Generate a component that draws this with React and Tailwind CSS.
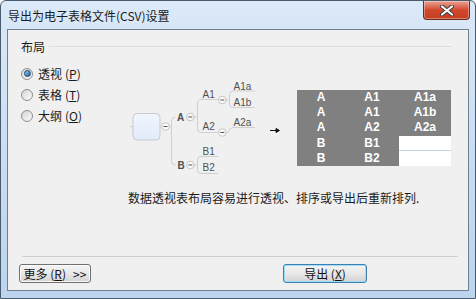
import React from "react";

const cjk = { fontFamily: '"Noto Sans CJK SC", "Liberation Sans", sans-serif' };

const Radio = ({ label, hotkey, checked }) => (
  <div className="flex h-[21px] items-center">
    <span className="flex h-[12px] w-[12px] items-center justify-center rounded-full border border-[#8e8f8f] bg-gradient-to-br from-[#d6d6d6] to-[#fbfbfb]">
      {checked && (
        <span className="h-[7px] w-[7px] rounded-full border border-[#19426a] bg-gradient-to-br from-[#8dd3f7] to-[#1a62a6]" />
      )}
    </span>
    <span className="ml-[5px] text-[12px] leading-[14px] text-[#1a1a1a]">
      {label}
      <span className="ml-[3px]">(</span>
      <span className="underline">{hotkey}</span>
      <span>)</span>
    </span>
  </div>
);

const Minus = ({ cx, cy }) => (
  <g>
    <circle cx={cx} cy={cy} r="3.8" fill="#fafafa" stroke="#c4c4c4" strokeWidth="1" />
    <line x1={cx - 2} y1={cy} x2={cx + 2} y2={cy} stroke="#555" strokeWidth="1" />
  </g>
);

const MindMap = () => (
  <svg width="162" height="120" viewBox="128 63 162 120" className="block">
    <defs>
      <linearGradient id="rootFill" x1="0" y1="0" x2="0" y2="1">
        <stop offset="0" stopColor="#f0f5fd" />
        <stop offset="1" stopColor="#e2ebfa" />
      </linearGradient>
    </defs>
    <g fill="none" stroke="#cfcfcf" strokeWidth="1">
      <line x1="130" y1="126.5" x2="133" y2="126.5" />
      <line x1="169.5" y1="126.5" x2="171.5" y2="126.5" />
      <path d="M171.5 126.5 V121 Q171.5 117 175.5 117" />
      <path d="M171.5 126.5 V161 Q171.5 165 175.5 165" />
      <path d="M194 117 H197.5 M197.5 117 V104 Q197.5 99.5 201 99.5 H218" />
      <path d="M197.5 117 V129 Q197.5 132.5 201 132.5 H218" />
      <path d="M226 100 H229.5 M229.5 100 V95 Q229.5 91 233 91 H255" />
      <path d="M229.5 100 V104 Q229.5 107.5 233 107.5 H255" />
      <path d="M226 132.5 H228 Q229.5 127.5 233 127.5 H255" />
      <path d="M194 165 H197.5 M197.5 165 V160 Q197.5 156.5 201 156.5 H218" />
      <path d="M197.5 165 V170 Q197.5 173.5 201 173.5 H218" />
    </g>
    <rect x="133" y="113.5" width="27" height="26.5" rx="4" fill="url(#rootFill)" stroke="#c9c9c9" />
    <Minus cx={165.5} cy={126.5} />
    <Minus cx={190.3} cy={117} />
    <Minus cx={222.3} cy={100} />
    <Minus cx={222.3} cy={132.5} />
    <Minus cx={190.3} cy={165} />
    <g fontFamily="Liberation Sans, sans-serif" fontSize="10" fill="#505050">
      <text x="177" y="120.6" fontWeight="bold">A</text>
      <text x="177.5" y="168.6" fontWeight="bold">B</text>
      <text x="202.5" y="97.8">A1</text>
      <text x="202.5" y="130.3">A2</text>
      <text x="233.5" y="89.6">A1a</text>
      <text x="233.5" y="106.3">A1b</text>
      <text x="233.5" y="126.3">A2a</text>
      <text x="202.5" y="154.6">B1</text>
      <text x="202.5" y="171.3">B2</text>
    </g>
    <g stroke="#111" strokeWidth="1" fill="#111">
      <line x1="270" y1="130.5" x2="278" y2="130.5" />
      <path d="M276 128.5 L279.5 130.5 L276 132.5 Z" />
    </g>
  </svg>
);

const rows = [
  ["A", "A1", "A1a"],
  ["A", "A1", "A1b"],
  ["A", "A2", "A2a"],
  ["B", "B1", ""],
  ["B", "B2", ""],
];

const PivotTable = () => (
  <div
    className="mt-[27px] flex w-[154px] flex-col bg-[#808080] text-[12px] font-bold leading-[15px] text-white"
    style={{ fontFamily: '"Liberation Sans", sans-serif' }}
  >
    {rows.map((r, i) => (
      <div key={i} className="grid h-[15.2px] grid-cols-[48px_54px_52px]">
        <div className="text-center">{r[0]}</div>
        <div className="text-center">{r[1]}</div>
        {r[2] ? (
          <div className="text-center">{r[2]}</div>
        ) : (
          <div className={i === 3 ? "border-b border-[#c9d3e0] bg-white" : "bg-white"} />
        )}
      </div>
    ))}
  </div>
);

const Button = ({ children, primary, className }) => (
  <button
    className={
      "flex h-[19px] items-center justify-center rounded-[3px] border bg-gradient-to-b from-[#f4f4f4] via-[#e8e8e8] to-[#d2d2d2] text-[12px] leading-[14px] text-[#111] " +
      (primary
        ? "border-[#3c7fb1] shadow-[inset_0_0_0_1px_#9fdcf7] "
        : "border-[#707070] shadow-[inset_0_0_0_1px_#fbfbfb] ") +
      className
    }
  >
    {children}
  </button>
);

export default function App() {
  return (
    <div
      className="flex h-[299px] w-[476px] flex-col overflow-hidden rounded-t-[6px] border border-[#4b5b6e] bg-gradient-to-b from-[#dbe9f8] via-[#cadef2] to-[#bcd4ee]"
      style={cjk}
    >
      <div className="flex h-[28px] shrink-0 items-start">
        <div className="pl-[7px] pt-[7px] text-[12px] leading-[16px] text-[#1b1b1b]">
          导出为电子表格文件(CSV)设置
        </div>
        <div className="ml-auto mr-[5px] flex h-[19px] w-[47px] items-center justify-center rounded-b-[4px] border border-t-0 border-[#6e2a22] bg-gradient-to-b from-[#e8a193] via-[#d2472e] to-[#c2401f] shadow-[inset_0_0_0_1px_rgba(255,255,255,0.35)]">
          <svg width="14" height="11" viewBox="0 0 14 11">
            <path d="M2 1.5 L12 9.5 M12 1.5 L2 9.5" stroke="#3a3a3a" strokeWidth="4" strokeLinecap="round" />
            <path d="M2 1.5 L12 9.5 M12 1.5 L2 9.5" stroke="#ffffff" strokeWidth="2.2" strokeLinecap="round" />
          </svg>
        </div>
      </div>

      <div className="mx-[6px] flex h-[262px] flex-col border border-[#6e7f90] bg-[#f0f0f0]">
        <div className="ml-[13px] mr-[16px] mt-[10px] flex h-[13px] items-center gap-[4px]">
          <span className="text-[12px] leading-[13px] text-[#1a1a1a]">布局</span>
          <div className="h-px flex-1 bg-[#d5dfe5]" />
        </div>

        <div className="ml-[13px] mt-[10px] flex">
          <div className="flex w-[107px] flex-col">
            <Radio label="透视" hotkey="P" checked />
            <Radio label="表格" hotkey="T" />
            <Radio label="大纲" hotkey="O" />
          </div>
          <div className="flex flex-col">
            <div className="flex items-start gap-[7px]">
              <MindMap />
              <PivotTable />
            </div>
            <div className="mt-[7px] text-[12px] leading-[16px] text-[#1a1a1a]">
              数据透视表布局容易进行透视、排序或导出后重新排列.
            </div>
          </div>
        </div>

        <div className="ml-[14px] mr-[10px] mt-[50px] h-[2px] border-t border-[#d0d0d0] border-b-white" />

        <div className="ml-[11px] mt-[6px] flex">
          <Button className="w-[72px] gap-[7px]">
            <span>
              更多 (<span className="underline">R</span>)
            </span>
            <span>&gt;&gt;</span>
          </Button>
          <Button primary className="ml-[192px] w-[84px]">
            <span>
              导出 (<span className="underline">X</span>)
            </span>
          </Button>
        </div>
      </div>
    </div>
  );
}
